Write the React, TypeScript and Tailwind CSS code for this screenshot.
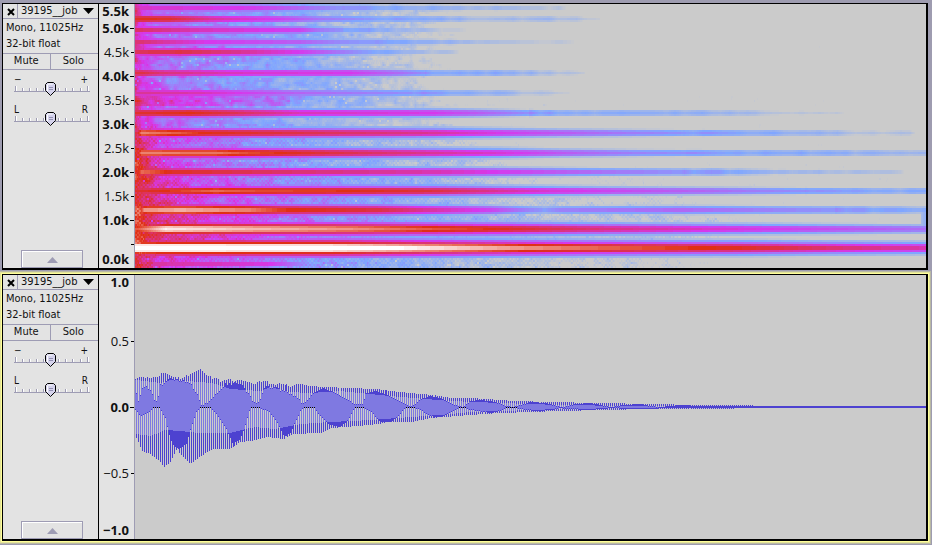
import React, { useMemo, useState } from "react";

type Keys = [number, number][];

const W = 791;
const H = 264;
const LEFT = 135;

/** Linear interpolation through a sorted list of [x, value] keys. */
function at(keys: Keys, x: number): number {
  if (x <= keys[0][0]) return keys[0][1];
  for (let i = 1; i < keys.length; i++) {
    if (x <= keys[i][0]) {
      const [x0, a] = keys[i - 1];
      const [x1, b] = keys[i];
      return a + ((b - a) * (x - x0)) / (x1 - x0);
    }
  }
  return keys[keys.length - 1][1];
}

function hash(x: number, y: number): number {
  let h = Math.imul(x, 374761393) ^ Math.imul(y, 668265263);
  h = Math.imul(h ^ (h >>> 13), 1274126177);
  return ((h ^ (h >>> 16)) >>> 0) / 4294967296;
}

function smooth(x: number, y: number): number {
  const xi = Math.floor(x);
  const yi = Math.floor(y);
  const fx = x - xi;
  const fy = y - yi;
  const top = hash(xi, yi) * (1 - fx) + hash(xi + 1, yi) * fx;
  const bottom = hash(xi, yi + 1) * (1 - fx) + hash(xi + 1, yi + 1) * fx;
  return top * (1 - fy) + bottom * fy;
}

/* Harmonics: centre row, spread, and energy over time. */
const partials: { y: number; k: number; keys: Keys }[] = [
  { y: 3, k: 1, keys: [[140, 0.55], [250, 0.5], [300, 0.4], [350, 0.27], [434, 0.2], [500, 0.12], [560, 0.07], [580, 0]] },
  { y: 14, k: 1, keys: [[140, 0.74], [170, 0.72], [210, 0.6], [280, 0.48], [320, 0.36], [400, 0.25], [480, 0.15], [560, 0.12], [590, 0.04], [600, 0]] },
  { y: 25, k: 1, keys: [[140, 0.66], [200, 0.57], [300, 0.48], [320, 0.36], [350, 0.28], [434, 0.1], [470, 0]] },
  { y: 37, k: 1, keys: [[140, 0.65], [200, 0.52], [300, 0.42], [340, 0.32], [434, 0.2], [500, 0.1], [560, 0.05], [580, 0]] },
  { y: 47, k: 1, keys: [[140, 0.68], [180, 0.7], [250, 0.6], [300, 0.5], [350, 0.33], [434, 0.1], [465, 0.04], [480, 0]] },
  { y: 68, k: 1, keys: [[140, 0.7], [160, 0.64], [250, 0.54], [350, 0.5], [400, 0.38], [434, 0.27], [500, 0.22], [550, 0.13], [585, 0]] },
  { y: 88, k: 1, keys: [[140, 0.6], [200, 0.57], [260, 0.46], [300, 0.4], [434, 0.28], [500, 0.18], [550, 0.06], [570, 0]] },
  { y: 108, k: 1, keys: [[140, 0.72], [190, 0.75], [240, 0.67], [300, 0.56], [434, 0.5], [480, 0.42], [540, 0.27], [600, 0.22], [680, 0.2], [740, 0.16], [760, 0.08], [800, 0.05], [850, 0]] },
  { y: 128, k: 1, keys: [[137, 0.7], [141, 0.85], [180, 0.8], [200, 0.75], [300, 0.69], [434, 0.6], [500, 0.5], [600, 0.38], [680, 0.3], [760, 0.23], [860, 0.11], [910, 0.06], [915, 0]] },
  { y: 148, k: 1, keys: [[137, 0.7], [141, 0.85], [220, 0.83], [250, 0.78], [280, 0.75], [330, 0.7], [434, 0.6], [500, 0.53], [560, 0.43], [640, 0.33], [700, 0.29], [800, 0.22], [926, 0.14]] },
  { y: 167, k: 1, keys: [[137, 0.72], [141, 0.83], [160, 0.78], [170, 0.74], [300, 0.65], [434, 0.58], [500, 0.5], [600, 0.38], [680, 0.3], [740, 0.25], [800, 0.15], [860, 0.09], [900, 0.05], [905, 0]] },
  { y: 186, k: 1, keys: [[140, 0.72], [180, 0.77], [215, 0.82], [260, 0.78], [330, 0.76], [434, 0.7], [500, 0.6], [560, 0.52], [620, 0.46], [700, 0.4], [780, 0.32], [926, 0.2]] },
  { y: 205, k: 1.1, keys: [[138, 0.7], [144, 0.88], [180, 0.91], [250, 0.85], [280, 0.77], [380, 0.7], [434, 0.59], [490, 0.48], [530, 0.33], [545, 0.29], [560, 0.34], [680, 0.4], [780, 0.33], [926, 0.25]] },
  { y: 224, k: 1.1, keys: [[136, 0.8], [165, 0.98], [250, 0.92], [350, 0.87], [430, 0.8], [480, 0.76], [600, 0.63], [700, 0.55], [790, 0.48], [926, 0.38]] },
  { y: 243, k: 1.1, keys: [[135, 1.1], [330, 1.08], [434, 0.97], [520, 0.88], [600, 0.82], [680, 0.77], [740, 0.74], [830, 0.65], [926, 0.58]] },
  { y: 259, k: 0.9, keys: [[150, 0.6], [230, 0.56], [270, 0.52], [300, 0.35], [330, 0]] },
];

const falloff: Keys = [[0, 0], [1, 0.01], [2, 0.06], [3, 0.15], [4, 0.3], [6, 0.45], [8, 0.64], [10, 0.9], [12, 1.3]];

/* Diffuse energy between the harmonics, for three bands of the range. */
const hazeHigh: Keys = [[135, 0.6], [142, 0.47], [160, 0.39], [200, 0.33], [250, 0.26], [300, 0.19], [350, 0.11], [420, 0.02], [470, -0.12]];
const hazeMid: Keys = [[135, 0.72], [160, 0.5], [200, 0.4], [260, 0.29], [330, 0.2], [400, 0.12], [480, 0.03], [540, -0.12]];
const hazeLow: Keys = [[135, 0.78], [160, 0.62], [200, 0.53], [260, 0.43], [330, 0.34], [400, 0.26], [500, 0.16], [600, 0.1], [700, 0.03], [790, -0.12]];

const ramp: [number, number, number][] = [
  [203, 203, 203],
  [128, 166, 255],
  [214, 56, 236],
  [224, 48, 20],
  [255, 255, 255],
];

const LEVELS = 72;

function colour(level: number): string {
  const t = (level / LEVELS) * 4;
  const i = Math.min(3, Math.floor(t));
  const f = t - i;
  const [a, b] = [ramp[i], ramp[i + 1]];
  return `rgb(${a.map((c, n) => Math.round(c + (b[n] - c) * f)).join(",")})`;
}

function energy(col: number, row: number): number {
  const x = col + LEFT;
  const high = at(hazeHigh, x);
  const mid = at(hazeMid, x);
  const low = at(hazeLow, x);
  let haze: number;
  if (row < 110) haze = high;
  else if (row < 150) haze = high + ((mid - high) * (row - 110)) / 40;
  else if (row < 230) haze = mid + ((low - mid) * (row - 150)) / 80;
  else haze = low;
  if (row > 248) haze -= 0.08;
  if (row > 90 && row < 102) haze += x < 290 ? 0.12 : 0.05;
  let v = haze + (smooth(col / 12, row / 5) - 0.5) * 0.12 + (smooth(col / 4 + 50, row / 3) - 0.5) * 0.16;
  const fine = hash(col, row) - 0.5;
  v += row > 120 ? (((col >> 1) + (row >> 1)) % 2 ? 0.02 : -0.02) + fine * 0.05 : fine * 0.03;
  const speck = hash((col >> 1) + 7, row + 91);
  if (speck > 0.98) v -= 0.16;
  for (const p of partials) {
    const d = Math.abs(row - p.y);
    if (d > 12) continue;
    const peak = at(p.keys, x);
    if (peak <= 0) continue;
    const wobble = peak < 0.3 ? (smooth(col / 9, p.y) - 0.5) * 0.09 : 0;
    v = Math.max(v, peak - at(falloff, d / p.k) + wobble);
  }
  if (x < 143) {
    const onset = row < 100 ? 0.5 : 0.62;
    v = Math.max(v, onset - (x - 135) * 0.02 + fine * 0.1);
  }
  if (x > 920 && row > 207 && row < 228) v = Math.max(v, 0.1 + (x - 920) * 0.02);
  return v;
}

function Spectrogram() {
  const bands = useMemo(() => {
    const paths: string[] = Array(LEVELS + 1).fill("");
    for (let row = 0; row < H; row += 2) {
      let start = 0;
      let current = -1;
      for (let col = 0; col <= W; col++) {
        const level =
          col === W ? -2 : Math.max(0, Math.min(LEVELS, Math.round(energy(col, row) * LEVELS)));
        if (level !== current) {
          if (current > 0) paths[current] += `M${start} ${row}h${col - start}v2h${start - col}z`;
          start = col;
          current = level;
        }
      }
    }
    return paths;
  }, []);
  return (
    <svg
      role="img"
      aria-label="Spectrogram"
      viewBox={`0 0 ${W} ${H}`}
      preserveAspectRatio="none"
      shapeRendering="crispEdges"
      className="block h-full w-full"
    >
      {bands.map((d, i) => (d ? <path key={i} d={d} fill={colour(i)} /> : null))}
    </svg>
  );
}

/* Waveform outlines: alternate columns swing up and down. */
const outerTop: Keys = [[135, 380], [140, 376], [152, 378], [160, 374], [170, 374], [180, 379], [188, 375], [200, 369], [210, 377], [220, 381], [230, 380], [244, 380], [255, 384], [260, 381], [270, 383], [290, 386], [300, 384], [310, 386], [323, 387], [350, 388], [375, 389], [400, 392], [420, 394], [434, 395], [450, 398], [470, 398], [500, 400], [515, 401], [550, 402], [600, 403], [650, 404], [700, 405], [740, 405], [765, 406], [926, 406]];
const outerBottom: Keys = [[136, 438], [142, 451], [150, 454], [158, 460], [164, 467], [170, 462], [176, 450], [182, 456], [190, 464], [195, 460], [204, 454], [212, 449], [230, 449], [240, 442], [250, 441], [268, 437], [283, 439], [293, 434], [320, 433], [332, 428], [345, 427], [370, 425], [390, 422], [412, 422], [430, 418], [445, 417], [470, 415], [500, 413], [530, 412], [560, 411], [600, 410], [650, 409], [700, 409], [732, 409], [736, 408], [926, 408]];
const innerTop: Keys = [[136, 394], [138, 402], [142, 389], [146, 386], [150, 390], [154, 400], [157, 402], [160, 385], [170, 378], [185, 381], [192, 386], [198, 397], [201, 404], [208, 403], [214, 396], [220, 390], [225, 384], [240, 383], [250, 396], [254, 403], [257, 404], [260, 398], [265, 387], [275, 388], [290, 393], [298, 399], [302, 404], [306, 401], [312, 394], [322, 388], [335, 393], [345, 398], [354, 404], [362, 404], [366, 393], [375, 391], [390, 396], [400, 401], [408, 406], [414, 405], [420, 399], [430, 396], [440, 398], [452, 404], [462, 407], [470, 401], [480, 400], [495, 402], [506, 406], [513, 407], [520, 405], [530, 402], [545, 403], [556, 406], [562, 407], [575, 404], [590, 403], [600, 405], [612, 407], [622, 405], [640, 404], [650, 406], [660, 407], [680, 405], [700, 406], [926, 406]];
const innerBottom: Keys = [[136, 410], [140, 416], [150, 412], [152, 408], [159, 408], [165, 418], [168, 432], [172, 444], [178, 449], [186, 444], [190, 430], [196, 412], [200, 408], [210, 408], [216, 414], [225, 427], [232, 443], [240, 439], [245, 425], [250, 408], [258, 408], [268, 411], [276, 421], [284, 437], [290, 433], [296, 420], [301, 409], [304, 408], [314, 408], [318, 414], [328, 424], [340, 427], [348, 420], [354, 408], [362, 408], [370, 411], [380, 422], [390, 422], [398, 416], [405, 408], [412, 408], [418, 409], [430, 416], [440, 417], [452, 411], [458, 408], [464, 408], [470, 410], [490, 413], [500, 411], [506, 408], [513, 408], [520, 409], [535, 411], [553, 410], [560, 408], [565, 409], [590, 410], [600, 409], [612, 408], [625, 409], [650, 409], [665, 408], [926, 408]];
const rmsTop: Keys = [[135, 380], [160, 383], [170, 380], [200, 382], [212, 383], [230, 389], [260, 391], [270, 387], [290, 392], [310, 393], [340, 391], [370, 394], [400, 397], [450, 401], [500, 403], [560, 405], [700, 407]];
const rmsBottom: Keys = [[136, 434], [150, 436], [165, 430], [180, 431], [200, 433], [230, 433], [245, 429], [255, 427], [275, 429], [300, 424], [330, 422], [370, 420], [410, 417], [440, 415], [470, 412], [500, 411], [560, 409], [700, 407]];

/* Middle of each beat, where the up and down columns trade places. */
const swaps = [178, 234, 286, 340, 386, 434, 484, 540, 590, 640, 690];

function Waveform() {
  const { peaks, rms, rests } = useMemo(() => {
    let peaks = "";
    let rms = "";
    let rests = "";
    for (let col = 0; col < W; col++) {
      const x = col + LEFT;
      const up = (x + swaps.filter((s) => s <= x).length) % 2 === 1;
      const jitter = x < 300 ? Math.round((hash(x, 5) - 0.5) * 3) : 0;
      const top = Math.round(at(up ? outerTop : innerTop, x)) + jitter - 275;
      const bottom = Math.round(at(up ? innerBottom : outerBottom, x)) - 275;
      if (top < bottom) peaks += `M${col} ${top}h1V${bottom}h-1z`;
      const a = Math.max(top + 1, Math.round(at(rmsTop, x)) - 275);
      const b = Math.min(bottom - 1, Math.round(at(rmsBottom, x)) - 275);
      if (a < b) rms += `M${col} ${a}h1V${b}h-1z`;
      if (up && bottom === 133 && x < 520) rests += `M${col} 132h1v1h-1z`;
    }
    return { peaks, rms, rests };
  }, []);
  return (
    <svg
      role="img"
      aria-label="Waveform"
      viewBox={`0 0 ${W} ${H}`}
      preserveAspectRatio="none"
      shapeRendering="crispEdges"
      className="block h-full w-full"
    >
      <path d={peaks} fill="#4d42d0" />
      <path d={rms} fill="#7f79e1" />
      <path d={rests} fill="#000000" />
    </svg>
  );
}

function Slider({ name, low, high }: { name: string; low: string; high: string }) {
  const [value, setValue] = useState(50);
  return (
    <div className="h-[30px] pl-[11px] pr-2">
      <div className="flex justify-between pr-0.5 text-[10px] leading-[10px]">
        <span>{low}</span>
        <span>{high}</span>
      </div>
      <div className="relative -mt-1 h-4">
        <svg viewBox="0 0 76 16" className="mx-auto block h-4 w-[76px]" aria-hidden="true" shapeRendering="crispEdges">
          <path d="M0 10.5h76" stroke="#9e9cb4" />
          {[1, 8, 15, 22, 29, 44, 51, 58, 66, 73].map((x, i) => (
            <g key={x}>
              <path d={`M${x + 0.5} ${i % 9 === 0 ? 5 : 7}V10`} stroke="#9e9cb4" />
              <path d={`M${x + 1.5} ${i % 9 === 0 ? 5 : 7}V10`} stroke="#ffffff" />
            </g>
          ))}
          <g transform={`translate(${((value - 50) * 65) / 100} 0)`} shapeRendering="geometricPrecision">
            <path d="M33.5 1.5h6l2 2v6l-5 5-5-5v-6z" fill="#d5d3ec" stroke="#000000" />
            <path d="M33.5 10V4l1-1h4" fill="none" stroke="#ffffff" />
            <path d="M35 6.5h4M35 8.5h4" stroke="#9492b4" />
          </g>
        </svg>
        <input
          type="range"
          aria-label={name}
          value={value}
          onChange={(e) => setValue(Number(e.target.value))}
          className="absolute inset-0 w-full opacity-0"
        />
      </div>
    </div>
  );
}

function TrackPanel() {
  return (
    <section className="flex w-24 shrink-0 flex-col border-r border-black bg-[#e3e3e3] font-['DejaVu_Sans_Condensed','DejaVu_Sans',sans-serif] text-[11px] text-[#111111]">
      <div className="flex h-[15px] border-b border-[#9e9cb4]">
        <button aria-label="Close track" className="flex w-[15px] items-center justify-center border-r border-[#9e9cb4] pl-px pt-px">
          <svg viewBox="0 0 8 8" className="h-2 w-2" aria-hidden="true">
            <path d="M1 1l6 6M7 1L1 7" stroke="#000000" strokeWidth="2" />
          </svg>
        </button>
        <button className="flex flex-1 items-center justify-between pl-[3px] pr-1 leading-[14px]">
          39195__job
          <svg viewBox="0 0 11 6" className="h-1.5 w-[11px]" aria-hidden="true">
            <path d="M0 0h11L5.5 6z" fill="#000000" />
          </svg>
        </button>
      </div>
      <div className="h-[34px] pl-[3px] pt-px leading-4">
        <p>Mono, 11025Hz</p>
        <p>32-bit float</p>
      </div>
      <div className="grid h-[17px] grid-cols-2 border-y border-[#9e9cb4]">
        <button className="border-r border-[#9e9cb4] pb-0.5 leading-[13px]">Mute</button>
        <button className="pb-0.5 pr-0.5 leading-[13px]">Solo</button>
      </div>
      <div className="pt-[5px]">
        <Slider name="Gain" low="−" high="+" />
        <Slider name="Pan" low="L" high="R" />
      </div>
      <button
        aria-label="Collapse track"
        className="ml-[18px] mt-auto flex h-[18px] w-[62px] items-center justify-center border border-[#9e9cb4] pt-0.5 shadow-[inset_1px_1px_0_#ffffff]"
      >
        <svg viewBox="0 0 11 6" className="h-1.5 w-[11px]" aria-hidden="true">
          <path d="M5.5 0L11 6H0z" fill="#9e9cb4" />
        </svg>
      </button>
    </section>
  );
}

function Mark({ label, size, major = true, tick = true }: { label?: string; size: string; major?: boolean; tick?: boolean }) {
  return (
    <div className={`flex justify-end gap-px ${size} ${major ? "font-bold" : ""}`}>
      <span className={tick ? "" : "pr-[5px]"}>{label}</span>
      {tick && (
        <span className="flex w-1 justify-end self-center">
          <span className={`h-px bg-black ${major && label ? "w-1" : "w-[3px]"}`} />
        </span>
      )}
    </div>
  );
}

const rulerClass =
  "flex w-9 shrink-0 flex-col border-r border-[#9e9cb4] bg-[#e3e3e3] font-['Open_Sans','Noto_Sans',sans-serif] text-[13px] text-[#111111]";

function FrequencyRuler() {
  return (
    <div className={rulerClass}>
      <Mark label="5.5k" size="h-3 leading-[14px]" tick={false} />
      {["5.0k", "4.5k", "4.0k", "3.5k", "3.0k", "2.5k", "2.0k", "1.5k", "1.0k"].map((label) => (
        <Mark key={label} label={label} size="h-6 leading-6" major={label.endsWith(".0k")} />
      ))}
      <Mark size="h-6" />
      <Mark label="0.0k" size="h-3 leading-[6px]" tick={false} />
    </div>
  );
}

function AmplitudeRuler() {
  return (
    <div className={rulerClass}>
      <Mark label="1.0" size="h-[33px] leading-[14px]" tick={false} />
      <Mark label="0.5" size="h-[66px] leading-[66px]" major={false} />
      <Mark label="0.0" size="h-[66px] leading-[66px]" />
      <Mark label="−0.5" size="h-[66px] leading-[66px]" major={false} />
      <Mark label="−1.0" size="h-[33px] items-end leading-[18px]" tick={false} />
    </div>
  );
}

function Track({ selected = false, ruler, children }: { selected?: boolean; ruler: React.ReactNode; children: React.ReactNode }) {
  return (
    <article
      className={`flex h-[267px] border-b-2 border-l border-r-2 border-t border-black bg-[#cbcbcb] ${
        selected ? "shadow-[0_0_0_1px_#ffff98,0_0_0_2px_#e2e29a,0_0_0_3px_#b9b9a4]" : ""
      }`}
    >
      <TrackPanel />
      {ruler}
      <div className="min-w-0 flex-1">{children}</div>
    </article>
  );
}

export default function App() {
  return (
    <main className="flex min-h-screen flex-col gap-1 bg-[#9e9cb0] pb-1 pl-0.5 pr-1 pt-[3px]">
      <Track ruler={<FrequencyRuler />}>
        <Spectrogram />
      </Track>
      <Track selected ruler={<AmplitudeRuler />}>
        <Waveform />
      </Track>
    </main>
  );
}
